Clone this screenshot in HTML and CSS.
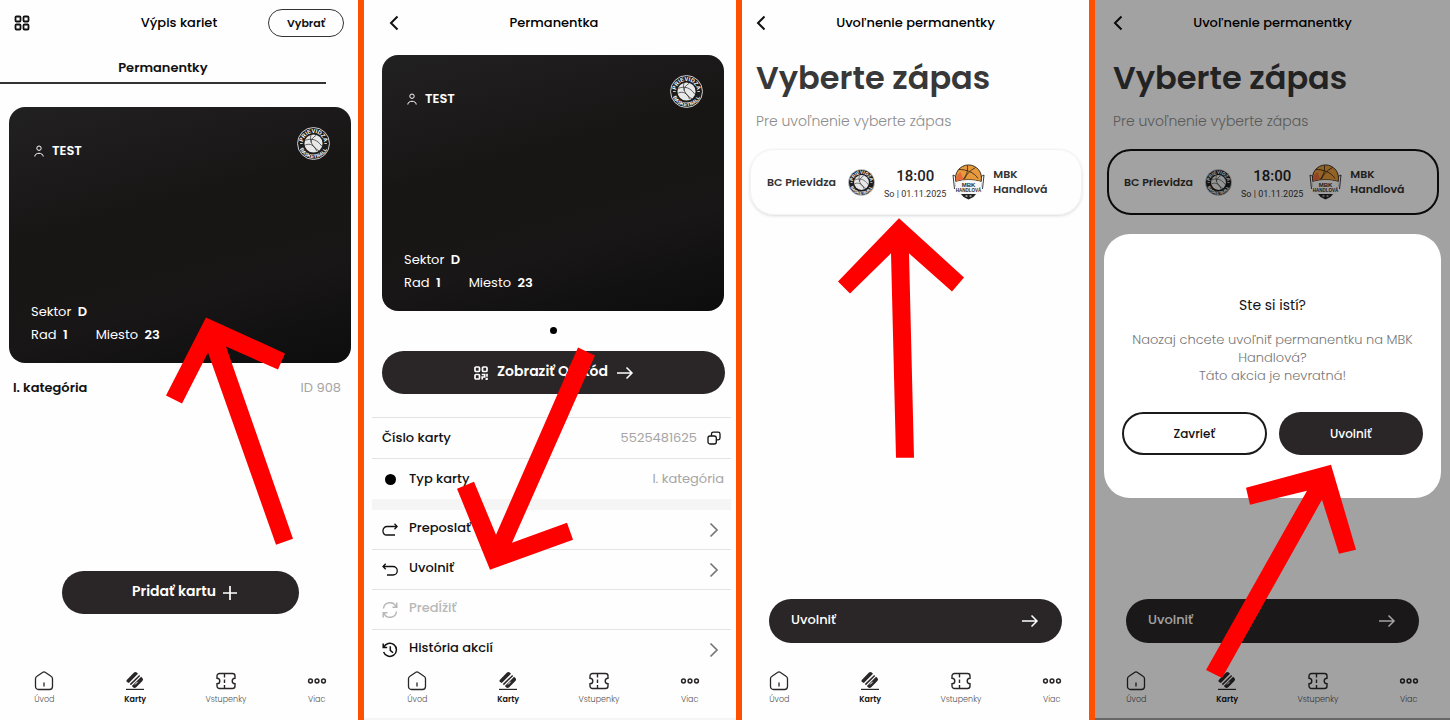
FILE: index.html
```html
<!DOCTYPE html>
<html lang="sk">
  <head>
    <meta charset="UTF-8" />
    <meta name="viewport" content="width=device-width, initial-scale=1.0" />
    <title>Uvoľnenie permanentky</title>
    <link rel="stylesheet" href="styles.css">
  </head>
  <body>
    <!-- icons -->
    <svg class="sprite" aria-hidden="true">
      <symbol id="i-back" viewBox="0 0 10 16"><path d="M8.500 1.500 2 8l6.500 6.500" fill="none" stroke="currentColor" stroke-width="2"/></symbol>
      <symbol id="i-next" viewBox="0 0 10 16"><path d="M1.500 1.500 8 8l-6.500 6.500" fill="none" stroke="currentColor" stroke-width="1.700"/></symbol>
      <symbol id="i-arrow" viewBox="0 0 18 14"><path d="M1 7h15M10.500 1.500 16 7l-5.500 5.500" fill="none" stroke="currentColor" stroke-width="1.500"/></symbol>
      <symbol id="i-grid" viewBox="0 0 16 16"><g fill="none" stroke="currentColor" stroke-width="1.800"><rect x="1.500" y="1.500" width="5" height="5" rx="1"/><rect x="9.500" y="1.500" width="5" height="5" rx="1"/><rect x="1.500" y="9.500" width="5" height="5" rx="1"/><rect x="9.500" y="9.500" width="5" height="5" rx="1"/></g></symbol>
      <symbol id="i-qr" viewBox="0 0 16 16"><g fill="none" stroke="currentColor" stroke-width="1.700"><rect x="2" y="2" width="4.500" height="4.500" rx="1"/><rect x="9.500" y="2" width="4.500" height="4.500" rx="1"/><rect x="2" y="9.500" width="4.500" height="4.500" rx="1"/><path d="M8.700 9.500h3v2.500h-2.500v2.500M14 8.700v3M12.500 14.200h2M14 12.700v2"/></g></symbol>
      <symbol id="i-user" viewBox="0 0 12 12"><g fill="none" stroke="currentColor"><circle cx="6" cy="3.200" r="2.200"/><path d="M1.800 11.500c0-4.300 8.400-4.300 8.400 0"/></g></symbol>
      <symbol id="i-copy" viewBox="0 0 14 14"><g fill="none" stroke="currentColor" stroke-width="1.300"><path d="M4.500 4.800V3A1.800 1.800 0 0 1 6.300 1.200h4.900A1.800 1.800 0 0 1 13 3v4a1.800 1.800 0 0 1-1.800 1.800H9.500"/><rect x="1" y="5" width="8.300" height="8" rx="2"/></g></symbol>
      <symbol id="i-forward" viewBox="0 0 16 16"><path d="M14.500 4.500H5a4 4 0 0 0-4 4v1a3.500 3.500 0 0 0 3.500 3.500H13M12.500 1.800l2.700 2.700-2.700 2.700" fill="none" stroke="currentColor" stroke-width="1.300"/></symbol>
      <symbol id="i-undo" viewBox="0 0 16 16"><path d="M1.500 4.500H11a4.200 4.200 0 0 1 0 8.500H5M3.700 1.800 1 4.500l2.700 2.700" fill="none" stroke="currentColor" stroke-width="1.300"/></symbol>
      <symbol id="i-renew" viewBox="0 0 16 16"><path d="M1.500 6.500A6.500 6.500 0 0 1 14 4.800M14.800.5v4.800H10.500M14.500 9.500A6.500 6.500 0 0 1 2 11.200M1.200 15.500v-4.800h4.300" fill="none" stroke="currentColor" stroke-width="1.500"/></symbol>
      <symbol id="i-history" viewBox="0 0 16 16"><path d="M1.200 1.500v4h4M1.700 5.300A6.600 6.600 0 1 1 1.600 10M8.300 4.300v4l2.700 2.400" fill="none" stroke="currentColor" stroke-width="1.500"/></symbol>
      <symbol id="i-home" viewBox="0 0 20 20"><path d="M8.500 1.500a2.500 2.500 0 0 1 3 0l5.500 3.800a3 3 0 0 1 1.500 2.500V15.500a3 3 0 0 1-3 3h-11a3 3 0 0 1-3-3V7.800A3 3 0 0 1 3 5.300zM10 12v3" fill="none" stroke="currentColor" stroke-width="1.300" stroke-linecap="round"/></symbol>
      <symbol id="i-cards" viewBox="0 0 20 20"><g fill="currentColor"><path d="M1.500 9.300 9 1.500q1.400-1.200 2.800 0L13 2.700 3.800 12 1.600 10.800z"/><path d="M4.800 13.100 14.200 3.900l1 1L5.900 14.200z"/><path d="M6.900 15 16.100 5.800l1.300 1.300q1.400 1.400 0 2.900l-6.200 6.200q-1.700 1.400-3.200 0z"/><path d="M1 17.800h18v1.200H1z"/></g><path d="m10 13.500 2.600-2.700" stroke="#fff" stroke-width="1"/></symbol>
      <symbol id="i-ticket" viewBox="0 0 20 20"><path d="M3.500 2.500h13a2.500 2.500 0 0 1 2.500 2.500v2.200a2.800 2.800 0 0 0 0 5.600V15a2.500 2.500 0 0 1-2.500 2.500h-13A2.500 2.500 0 0 1 1 15v-2.200a2.800 2.800 0 0 0 0-5.600V5a2.500 2.500 0 0 1 2.500-2.500zM8.500 3v3.500M8.500 8.500v3.500M8.500 14v3" fill="none" stroke="currentColor" stroke-width="1.400"/></symbol>
      <symbol id="i-more" viewBox="0 0 20 20"><g fill="none" stroke="currentColor" stroke-width="1.500"><circle cx="3.500" cy="10" r="1.900"/><circle cx="10" cy="10" r="1.900"/><circle cx="16.500" cy="10" r="1.900"/></g></symbol>
      <symbol id="logo-bcp" viewBox="0 0 64 64">
        <circle cx="32" cy="32" r="31" fill="#1c1c1c" stroke="#ddd" stroke-width="1.800"/>
        <circle cx="32" cy="32" r="17.500" fill="#e8e8e8"/>
        <g fill="none" stroke="#1c1c1c" stroke-width="1.300"><path d="M16 26c12-5 23-2 32 11M27 15.500c-3 12 3 24 16 31M16 35c9-4 18 0 22 12M37 16c-6 4-9 8-10 14"/></g>
        <path id="arc-top" d="M11.500 32a20.500 20.500 0 0 1 41 0" fill="none"/>
        <path id="arc-bottom" d="M3.500 32a28.500 28.500 0 0 0 57 0" fill="none"/>
        <g class="logo-text" fill="#fff" text-anchor="middle"><text font-size="11"><textPath href="#arc-top" startOffset="50%">PRIEVIDZA</textPath></text><text font-size="10"><textPath href="#arc-bottom" startOffset="50%">BASKETBALL</textPath></text></g>
        <path d="M6 32h5M53 32h5" stroke="#ccc" stroke-width="2"/>
      </symbol>
      <symbol id="logo-mbk" viewBox="0 0 66 72">
        <path d="M2 22l6 3v20M64 22l-6 3v20M2 22l3 28M64 22l-3 28" fill="none" stroke="#29262b" stroke-width="1.800"/>
        <path d="M7 40h52l-1 16-10 8H18L8 56z" fill="#f7f7f7"/>
        <path d="M8 35A26 26 0 1 1 58 35Q33 28 8 35z" fill="#e79a3b" stroke="#29201c" stroke-width="1.800"/>
        <path d="M8 34q0-12 9-18l6 15q-9 0-15 3z" fill="#e9683c"/>
        <path d="M14 11c14 0 30 5 38 18M31 3c1 12-2 20-9 28M47 7c-11 6-18 13-22 23" fill="none" stroke="#29201c" stroke-width="1.600"/>
        <path d="M6 36q27-8 54 0l-2 8H8z" fill="#f7f7f7"/>
        <g class="logo-text" fill="#2b2b2b" text-anchor="middle"><text x="33" y="45" font-size="12">MBK</text><text x="33" y="56" font-size="9">HANDLOVÁ</text></g>
        <path d="M18 60h30l-5 6-10 5-10-5z" fill="#222"/>
        <path d="M27 64h4M35 64h4" stroke="#fff" stroke-width="2"/>
      </symbol>
    </svg>

    <main class="board">
      <!-- 1. zoznam kariet -->
      <section class="screen screen-list">
        <header class="topbar">
          <button class="icon-btn" aria-label="Zobrazenie"><svg class="ic-16"><use href="#i-grid"/></svg></button>
          <h2 class="topbar-title">Výpis kariet</h2>
          <button class="select-btn">Vybrať</button>
        </header>
        <button class="tab">Permanentky</button>
        <article class="card">
          <div class="card-top">
            <p class="owner"><svg class="ic-12"><use href="#i-user"/></svg>TEST</p>
            <svg class="card-logo"><use href="#logo-bcp"/></svg>
          </div>
          <div class="seat">
            <p>Sektor <b>D</b></p>
            <p class="seat-row"><span>Rad <b>1</b></span><span>Miesto <b>23</b></span></p>
          </div>
        </article>
        <div class="card-caption"><strong>I. kategória</strong><span>ID 908</span></div>
        <button class="pill add-btn">Pridať kartu <svg class="ic-plus" viewBox="0 0 14 14"><path d="M7 0v14M0 7h14" stroke="currentColor" stroke-width="1.700"/></svg></button>
        <nav class="tabbar">
          <a href="#"><svg><use href="#i-home"/></svg>Úvod</a>
          <a href="#" class="active"><svg><use href="#i-cards"/></svg>Karty</a>
          <a href="#"><svg><use href="#i-ticket"/></svg>Vstupenky</a>
          <a href="#"><svg><use href="#i-more"/></svg>Viac</a>
        </nav>
      </section>

      <!-- 2. detail permanentky -->
      <section class="screen screen-detail">
        <header class="topbar">
          <button class="icon-btn" aria-label="Späť"><svg class="ic-back"><use href="#i-back"/></svg></button>
          <h2 class="topbar-title">Permanentka</h2>
        </header>
        <article class="card">
          <div class="card-top">
            <p class="owner"><svg class="ic-12"><use href="#i-user"/></svg>TEST</p>
            <svg class="card-logo"><use href="#logo-bcp"/></svg>
          </div>
          <div class="seat">
            <p>Sektor <b>D</b></p>
            <p class="seat-row"><span>Rad <b>1</b></span><span>Miesto <b>23</b></span></p>
          </div>
        </article>
        <span class="dot"></span>
        <button class="pill qr-btn"><svg class="ic-16"><use href="#i-qr"/></svg>Zobraziť QR kód<svg class="ic-arrow"><use href="#i-arrow"/></svg></button>
        <ul class="info">
          <li><span>Číslo karty</span><span class="value">5525481625</span><button class="icon-btn" aria-label="Kopírovať"><svg class="ic-14"><use href="#i-copy"/></svg></button></li>
          <li><span class="bullet"></span><span>Typ karty</span><span class="value">I. kategória</span></li>
        </ul>
        <ul class="actions">
          <li><button><svg class="ic-16"><use href="#i-forward"/></svg>Preposlať<svg class="ic-next"><use href="#i-next"/></svg></button></li>
          <li><button><svg class="ic-16"><use href="#i-undo"/></svg>Uvolniť<svg class="ic-next"><use href="#i-next"/></svg></button></li>
          <li><button disabled><svg class="ic-16"><use href="#i-renew"/></svg>Predĺžiť</button></li>
          <li><button><svg class="ic-16"><use href="#i-history"/></svg>História akcií<svg class="ic-next"><use href="#i-next"/></svg></button></li>
        </ul>
        <nav class="tabbar">
          <a href="#"><svg><use href="#i-home"/></svg>Úvod</a>
          <a href="#" class="active"><svg><use href="#i-cards"/></svg>Karty</a>
          <a href="#"><svg><use href="#i-ticket"/></svg>Vstupenky</a>
          <a href="#"><svg><use href="#i-more"/></svg>Viac</a>
        </nav>
      </section>

      <!-- 3. výber zápasu -->
      <section class="screen screen-match">
        <header class="topbar">
          <button class="icon-btn" aria-label="Späť"><svg class="ic-back"><use href="#i-back"/></svg></button>
          <h2 class="topbar-title">Uvoľnenie permanentky</h2>
        </header>
        <h1 class="heading">Vyberte zápas</h1>
        <p class="lead">Pre uvoľnenie vyberte zápas</p>
        <button class="match">
          <span class="team">BC Prievidza</span>
          <svg class="logo-home"><use href="#logo-bcp"/></svg>
          <span class="kickoff"><span class="time">18:00</span><span class="date">So | 01.11.2025</span></span>
          <svg class="logo-away"><use href="#logo-mbk"/></svg>
          <span class="team">MBK<br>Handlová</span>
        </button>
        <button class="pill release-btn">Uvolniť<svg class="ic-arrow"><use href="#i-arrow"/></svg></button>
        <nav class="tabbar">
          <a href="#"><svg><use href="#i-home"/></svg>Úvod</a>
          <a href="#" class="active"><svg><use href="#i-cards"/></svg>Karty</a>
          <a href="#"><svg><use href="#i-ticket"/></svg>Vstupenky</a>
          <a href="#"><svg><use href="#i-more"/></svg>Viac</a>
        </nav>
      </section>

      <!-- 4. potvrdenie -->
      <section class="screen screen-match screen-confirm">
        <header class="topbar">
          <button class="icon-btn" aria-label="Späť"><svg class="ic-back"><use href="#i-back"/></svg></button>
          <h2 class="topbar-title">Uvoľnenie permanentky</h2>
        </header>
        <h1 class="heading">Vyberte zápas</h1>
        <p class="lead">Pre uvoľnenie vyberte zápas</p>
        <button class="match selected">
          <span class="team">BC Prievidza</span>
          <svg class="logo-home"><use href="#logo-bcp"/></svg>
          <span class="kickoff"><span class="time">18:00</span><span class="date">So | 01.11.2025</span></span>
          <svg class="logo-away"><use href="#logo-mbk"/></svg>
          <span class="team">MBK<br>Handlová</span>
        </button>
        <button class="pill release-btn">Uvolniť<svg class="ic-arrow"><use href="#i-arrow"/></svg></button>
        <nav class="tabbar">
          <a href="#"><svg><use href="#i-home"/></svg>Úvod</a>
          <a href="#" class="active"><svg><use href="#i-cards"/></svg>Karty</a>
          <a href="#"><svg><use href="#i-ticket"/></svg>Vstupenky</a>
          <a href="#"><svg><use href="#i-more"/></svg>Viac</a>
        </nav>
        <div class="overlay">
          <div class="dialog" role="dialog" aria-labelledby="dialog-title">
            <h3 id="dialog-title">Ste si istí?</h3>
            <p>Naozaj chcete uvoľniť permanentku na MBK Handlová?<br>Táto akcia je nevratná!</p>
            <div class="dialog-buttons">
              <button class="pill outline">Zavrieť</button>
              <button class="pill">Uvolniť</button>
            </div>
          </div>
        </div>
      </section>

      <!-- red arrows over the screens -->
      <svg class="arrows" viewBox="0 0 1450 720" preserveAspectRatio="none" fill="#ff0000" aria-hidden="true">
        <path d="M206 317 285 353 278 369 226 346 293 538 276 544 208 352 182 403 166 395z"/>
        <path d="M578 347 595 355 512 542 567 522 573 539 490 569 457 488 474 481 496 534z"/>
        <path d="M899 218 964 277 952 291 909 253 914 457 896 457 891 253 850 293 838 281z"/>
        <path d="M1331 464 1356 549 1339 553 1322 499 1222 677 1206 669 1307 490 1250 504 1246 487z"/>
      </svg>
    </main>
  </body>
</html>
```

FILE: styles.css
```css
* {
  box-sizing: border-box;
}
body,
h1,
h2,
h3,
p,
ul {
  margin: 0;
  padding: 0;
}
body {
  font-family: Poppins, Inter, "Liberation Sans", sans-serif;
  font-size: 13px;
  line-height: 18px;
  color: #111;
}
ul {
  list-style: none;
}
button {
  font: inherit;
  color: inherit;
  background: none;
  border: 0;
  padding: 0;
  cursor: pointer;
}
svg {
  display: block;
  flex: none;
}
.sprite {
  position: absolute;
  width: 0;
  height: 0;
}
.board {
  position: relative;
  display: grid;
  grid-template-columns: 358fr 372fr 347fr 355fr;
  gap: 6px;
  min-height: 100vh;
  background: #ff5000;
}
.screen {
  position: relative;
  display: flex;
  flex-direction: column;
  min-width: 0;
  overflow: hidden;
  background: #fefefe;
}

/* icon sizes */
.ic-12 { width: 12px; height: 12px; }
.ic-14 { width: 14px; height: 14px; }
.ic-16 { width: 16px; height: 16px; }
.ic-plus { width: 14px; height: 14px; }
.ic-back { width: 10px; height: 16px; }
.ic-next { width: 10px; height: 16px; }
.ic-arrow { width: 18px; height: 14px; }

/* top bar */
.topbar {
  display: grid;
  grid-template-columns: 1fr auto 1fr;
  align-items: center;
  height: 44px;
  padding: 1px 14px 0;
}
.icon-btn {
  justify-self: start;
}
.topbar-title {
  font-size: 13px;
  font-weight: 500;
  color: #000;
}
.select-btn {
  justify-self: end;
  width: 76px;
  height: 28px;
  border: 1px solid #333;
  border-radius: 14px;
  font-size: 11px;
  font-weight: 600;
}
.tab {
  width: 91%;
  height: 40px;
  padding-top: 10px;
  border-bottom: 2px solid #333;
  font-weight: 600;
}

/* membership card */
.card {
  display: flex;
  flex-direction: column;
  justify-content: space-between;
  height: 256px;
  padding: 20px 21px 19px 22px;
  border-radius: 16px;
  color: #fff;
  background: linear-gradient(165deg, #222122, #181515 40%, #181616 70%, #0d0d0d);
}
.card-top {
  display: flex;
  justify-content: space-between;
}
.owner {
  display: flex;
  align-items: center;
  gap: 7px;
  padding: 14px 0 0 2px;
  font-weight: 600;
}
.card-logo {
  width: 33px;
  height: 33px;
}
.seat {
  display: grid;
  gap: 5px;
}
.seat b {
  margin-left: 3px;
  font-weight: 600;
}
.seat-row {
  display: flex;
  gap: 28px;
}

/* buttons */
.pill {
  display: flex;
  align-items: center;
  justify-content: center;
  flex: none;
  height: 43px;
  padding-bottom: 3px;
  border-radius: 22px;
  color: #fff;
  background: #2a2627;
  font-size: 14px;
  font-weight: 600;
}
.pill svg {
  margin-top: 3px;
}

/* bottom navigation */
.tabbar {
  display: grid;
  grid-template-columns: repeat(4, 1fr);
  flex: none;
  height: 52px;
  padding-top: 2px;
}
.tabbar a {
  display: flex;
  flex-direction: column;
  align-items: center;
  gap: 3px;
  font-size: 8px;
  font-weight: 300;
  line-height: 12px;
  color: #555;
  text-decoration: none;
}
.tabbar svg {
  width: 20px;
  height: 20px;
  color: #2a2627;
}
.tabbar .active {
  font-weight: 600;
  color: #111;
}

/* card list */
.screen-list .card {
  margin: 23px 7px 0 9px;
}
.card-caption {
  display: flex;
  justify-content: space-between;
  padding: 16px 17px 0 13px;
}
.card-caption strong {
  font-weight: 600;
}
.card-caption span {
  color: #a5a5a5;
}
.add-btn {
  align-self: center;
  width: 66%;
  gap: 7px;
  margin: auto 0 55px 3px;
  padding-left: 8px;
}
.screen-list .tabbar {
  margin: 0 -4px 0 -1px;
}

/* card detail */
.screen-detail {
  border-bottom: 3px solid #f5f5f5;
}
.screen-detail .topbar {
  padding: 1px 17px 0 25px;
}
.screen-detail .card {
  margin: 11px 12px 0 18px;
}
.dot {
  align-self: center;
  width: 7px;
  height: 7px;
  margin: 16px 0 17px 6px;
  border-radius: 50%;
  background: #000;
}
.qr-btn {
  gap: 8px;
  margin: 0 11px 23px 18px;
}
.info,
.actions {
  margin: 0 5px 0 8px;
  font-weight: 500;
}
.info li {
  display: flex;
  align-items: center;
  gap: 10px;
  height: 41px;
  padding: 0 7px 0 10px;
  border-top: 1px solid #e3e3e3;
}
.bullet {
  width: 11px;
  height: 11px;
  margin: 0 3px;
  border-radius: 50%;
  background: #000;
}
.info .value {
  margin-left: auto;
  font-weight: 400;
  color: #a5a5a5;
}
.info .icon-btn {
  padding-right: 3px;
}
.actions {
  border-top: 11px solid #f5f5f5;
}
.actions li + li {
  border-top: 1px solid #e3e3e3;
}
.actions button {
  display: flex;
  align-items: center;
  gap: 11px;
  width: 100%;
  height: 39px;
  padding: 0 12px 3px 10px;
}
.actions svg {
  margin-top: 3px;
}
.actions button:disabled {
  color: #b8b8b8;
}
.actions .ic-next {
  margin-left: auto;
  color: #777;
}
.screen-detail .tabbar {
  height: 49px;
  margin: auto 1px 0 8px;
}

/* match selection */
.heading {
  padding: 12px 14px 0;
  font-size: 32px;
  font-weight: 600;
  line-height: 44px;
  color: #383838;
}
.lead {
  padding: 12px 14px 0;
  font-size: 14px;
  font-weight: 300;
  color: #8c8c8c;
}
.match {
  display: flex;
  align-items: center;
  height: 66px;
  margin: 19px 7px 0 8px;
  padding: 0 16px;
  border: 1px solid #f3f3f3;
  border-radius: 24px;
  box-shadow: 0 1px 3px rgba(0, 0, 0, 0.15);
  color: #333;
  text-align: left;
}
.match.selected {
  margin: 19px 11px 0 12px;
  padding: 0 15px;
  border: 2px solid #111;
  box-shadow: none;
}
.team {
  font-size: 11px;
  font-weight: 600;
  line-height: 15px;
}
.logo-home {
  width: 27px;
  height: 27px;
  margin: 0 9px 0 12px;
}
.kickoff {
  display: grid;
  gap: 2px;
  padding-top: 4px;
  font-family: Roboto, sans-serif;
  text-align: center;
}
.time {
  font-size: 15px;
  font-weight: 500;
  color: #222;
}
.date {
  font-size: 9px;
  line-height: 14px;
}
.logo-away {
  width: 33px;
  height: 36px;
  margin: 0 8px 0 6px;
}
.release-btn {
  justify-content: space-between;
  height: 44px;
  margin: auto 27px 26px;
  padding: 0 23px 3px 22px;
  font-size: 13px;
  font-weight: 500;
}
.screen-match .tabbar {
  margin: 0 -8px;
}
.logo-text {
  font-family: "Liberation Sans", sans-serif;
  font-weight: 700;
}

/* confirmation */
.screen-confirm .topbar,
.screen-confirm .heading,
.screen-confirm .lead {
  padding-left: 18px;
  padding-right: 18px;
}
.screen-confirm .release-btn {
  margin: auto 31px 26px;
}
.screen-confirm .tabbar {
  margin: 0 -4px;
}
.overlay {
  position: absolute;
  inset: 0;
  display: flex;
  align-items: center;
  padding: 14px 9px 0;
  background: rgba(0, 0, 0, 0.36);
  border-bottom: 3px solid rgba(0, 0, 0, 0.36);
}
.dialog {
  width: 100%;
  padding: 62px 18px 43px;
  border-radius: 26px;
  background: #fff;
  text-align: center;
}
.dialog h3 {
  font-size: 14px;
  font-weight: 400;
}
.dialog p {
  padding: 17px 0 27px;
  font-weight: 300;
  color: #777;
}
.dialog-buttons {
  display: grid;
  grid-template-columns: 1fr 1fr;
  gap: 12px;
}
.dialog .pill {
  padding-bottom: 0;
  font-size: 12px;
  font-weight: 500;
}
.dialog .outline {
  border: 2px solid #1a1a1a;
  color: #111;
  background: #fff;
}

.arrows {
  position: absolute;
  inset: 0;
  width: 100%;
  height: 100%;
  pointer-events: none;
}
```
